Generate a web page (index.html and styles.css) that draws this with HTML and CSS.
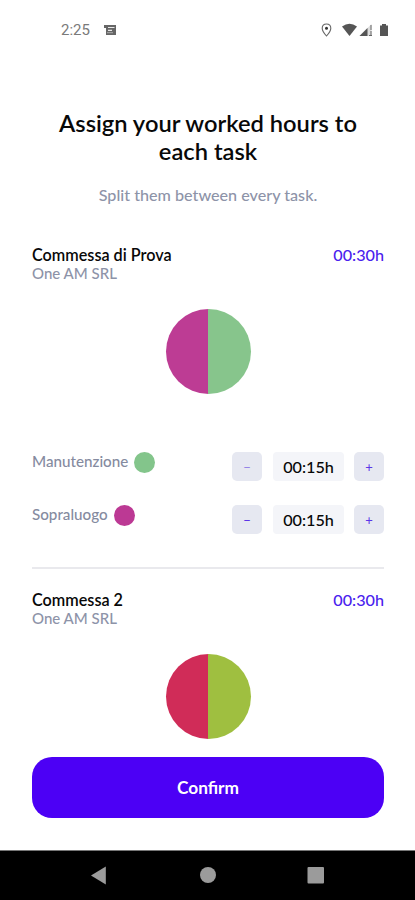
FILE: index.html
```html
<!DOCTYPE html>
<html lang="en">
<head>
<meta charset="utf-8">
<title>Assign worked hours</title>
<link rel="stylesheet" href="styles.css">
</head>
<body>
<div class="screen">
  <header class="status">
    <span class="clock">2:25</span>
    <svg class="note" width="14" height="12" viewBox="0 0 14 12"><path d="M1 1h12v10H3V4H1z" fill="#666"/><path d="M5 3.500h6.500M5 6.300h4" stroke="#e8e8e8" stroke-width="1.200"/><path d="M4 8.700h6" stroke="#aaa"/></svg>
    <svg class="signals" width="70" height="16" viewBox="0 0 70 16">
      <path d="M6.500 2C3.900 2 2.200 3.800 2.200 6.200 2.200 9.200 6.500 14 6.500 14S10.800 9.200 10.800 6.200C10.800 3.800 9.100 2 6.500 2z" fill="none" stroke="#666" stroke-width="1.100"/>
      <circle cx="6.500" cy="6.200" r="1.500" fill="#333"/>
      <path d="M22 4.500Q29.500-.8 37 4.500L29.500 14z" fill="#555"/>
      <path d="M39.500 14L51.500 2V14z" fill="#ddd"/><path d="M39.500 14L47.500 6V14z" fill="#555"/><path d="M51 3V8M49 13.500h3M51 9v5" stroke="#666"/>
      <path d="M60 3.500h2V2h4v1.500h2V14h-8z" fill="#555"/>
    </svg>
  </header>
  <main class="content">
    <h1>Assign your worked hours to each task</h1>
    <p class="lead">Split them between every task.</p>
    <section class="job">
      <div class="job-head"><h2>Commessa di Prova</h2><span class="total">00:30h</span></div>
      <p class="client">One AM SRL</p>
      <div class="pie pie-one"></div>
      <div class="tasks">
        <div class="task"><span class="name">Manutenzione</span><i class="dot green"></i><div class="stepper"><button class="faded">−</button><output>00:15h</output><button>+</button></div></div>
        <div class="task"><span class="name">Sopraluogo</span><i class="dot magenta"></i><div class="stepper"><button>−</button><output>00:15h</output><button>+</button></div></div>
      </div>
    </section>
    <section class="job second">
      <div class="job-head"><h2>Commessa 2</h2><span class="total">00:30h</span></div>
      <p class="client">One AM SRL</p>
      <div class="pie pie-two"></div>
    </section>
    <button class="confirm">Confirm</button>
  </main>
  <nav class="nav">
    <svg width="415" height="50" viewBox="0 0 415 50" fill="#9b9b9b"><path d="M91 25.500L105.800 16.500V34.500z"/><circle cx="208" cy="25" r="8"/><rect x="307.500" y="17" width="16.500" height="16.500" rx="1"/></svg>
  </nav>
</div>
</body>
</html>
```
FILE: styles.css
```css
* { box-sizing: border-box; }
body { margin: 0; background: #fff; font-family: Lato, sans-serif; color: #080808; }
h1, h2, p { margin: 0; }
button { border: 0; padding: 0; font-family: inherit; }
.screen { width: 415px; height: 900px; display: flex; flex-direction: column; overflow: hidden; }
.status { height: 60px; flex: none; display: flex; align-items: center; padding: 0 25px 0 61px; }
.clock { font: 15px/20px Roboto, sans-serif; color: #7a7a7a; width: 42px; }
.signals { margin-left: auto; }
.content { height: 790px; flex: none; padding: 49px 31px 0 32px; display: flex; flex-direction: column; }
h1 { font-size: 23.7px; line-height: 28px; font-weight: 600; text-align: center; padding: 0 20px; }
.lead { margin-top: 20px; font-size: 16.15px; line-height: 20px; text-align: center; color: #8d93a8; font-weight: 500; }
.job { margin-top: 40px; }
.job-head { display: flex; justify-content: space-between; height: 19px; }
h2, .total { font-size: 16.2px; line-height: 20px; font-weight: 600; }
.total { color: #4a22ee; font-weight: 500; }
.client { font-size: 15px; line-height: 18px; height: 17px; color: #8d93a8; font-weight: 500; }
.pie { width: 85px; height: 85px; border-radius: 50%; margin: 28px auto 0; }
.pie-one { background: linear-gradient(90deg, #bd3c94 50%, #87c58c 50%); }
.pie-two { background: linear-gradient(90deg, #d02c58 50%, #9fbf40 50%); }
.tasks { margin-top: 58px; display: flex; flex-direction: column; gap: 24px; }
.task { display: flex; align-items: flex-start; height: 29px; }
.name { font-size: 15.2px; line-height: 18px; color: #858ba0; font-weight: 500; }
.dot { width: 21px; height: 21px; border-radius: 50%; margin-left: 6px; }
.green { background: #83c58b; }
.magenta { background: #bc3994; }
.stepper { margin-left: auto; display: flex; gap: 11px; }
.stepper button { width: 30px; height: 29px; border-radius: 5px; background: #e6e8f1; color: #5b35e8; font-size: 13px; }
.stepper .faded { color: #9585e6; }
output { width: 71px; height: 29px; border-radius: 4px; background: #f4f5f9; font-size: 16.2px; line-height: 30px; text-align: center; font-weight: 500; }
.stepper button:last-child { margin-left: -1px; }
.second { margin-top: 33px; border-top: 2px solid #e9e9ed; padding-top: 21px; }
.confirm { margin-top: 18px; height: 61px; flex: none; border-radius: 20px; background: #4c00f5; color: #fff; font-size: 17.3px; font-weight: 700; }
.nav { height: 50px; flex: none; background: #000; border-top: 1px solid #777; }
.nav svg { display: block; margin-top: -1px; }
```
